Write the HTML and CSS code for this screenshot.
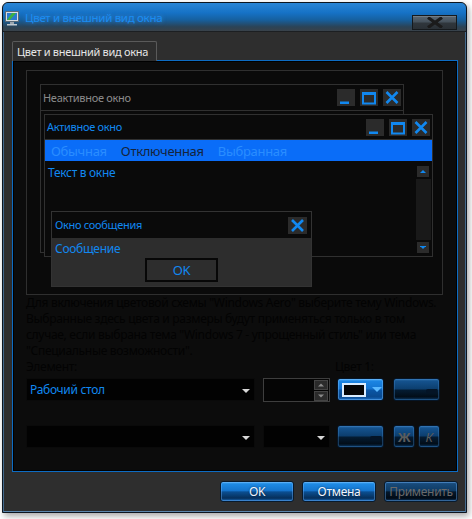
FILE: index.html
```html
<!DOCTYPE html>
<html lang="ru">
<head>
<meta charset="utf-8">
<title>Цвет и внешний вид окна</title>
<link rel="stylesheet" href="styles.css">
</head>
<body>
<div class="window">
  <div class="titlebar">
    <svg class="appicon" width="14" height="16" viewBox="0 0 14 16">
      <rect x="0.5" y="1.5" width="13" height="10" fill="#d8dde2" stroke="#5a6a78"/>
      <rect x="2" y="3" width="10" height="7" fill="#2a7ad0"/>
      <path d="M2 10 L7 3 L11 3 L5 10Z" fill="#3cb043"/>
      <rect x="5" y="12" width="4" height="2" fill="#9aa6b0"/>
      <rect x="2" y="14" width="10" height="1.5" fill="#c0c8d0"/>
    </svg>
    <span class="title">Цвет и внешний вид окна</span>
    <div class="closebtn">
      <svg width="20" height="11" viewBox="0 0 20 11"><path d="M3 0.5 L17 10.5 M17 0.5 L3 10.5" stroke="#1b1b1b" stroke-width="3.2"/></svg>
    </div>
  </div>
  <div class="frame">
    <div class="tab">Цвет и внешний вид окна</div>
    <div class="panel">
      <div class="preview">
        <div class="win inactive">
          <div class="wtitle">
            <span class="wname dim">Неактивное окно</span>
            <div class="wbtns">
              <span class="wbtn"><svg width="18" height="17" viewBox="0 0 18 17"><rect x="3" y="12.5" width="9" height="2.5" fill="#1188f0"/></svg></span>
              <span class="wbtn"><svg width="18" height="17" viewBox="0 0 18 17"><rect x="3" y="4" width="12" height="10.5" fill="none" stroke="#1188f0" stroke-width="2"/><rect x="2" y="3" width="14" height="3" fill="#1188f0"/></svg></span>
              <span class="wbtn"><svg width="18" height="17" viewBox="0 0 18 17"><path d="M3.5 3 L14.5 14 M14.5 3 L3.5 14" stroke="#1188f0" stroke-width="2.6"/></svg></span>
            </div>
          </div>
        </div>
        <div class="win active">
          <div class="wtitle">
            <span class="wname">Активное окно</span>
            <div class="wbtns">
              <span class="wbtn"><svg width="18" height="17" viewBox="0 0 18 17"><rect x="3" y="12.5" width="9" height="2.5" fill="#1188f0"/></svg></span>
              <span class="wbtn"><svg width="18" height="17" viewBox="0 0 18 17"><rect x="3" y="4" width="12" height="10.5" fill="none" stroke="#1188f0" stroke-width="2"/><rect x="2" y="3" width="14" height="3" fill="#1188f0"/></svg></span>
              <span class="wbtn"><svg width="18" height="17" viewBox="0 0 18 17"><path d="M3.5 3 L14.5 14 M14.5 3 L3.5 14" stroke="#1188f0" stroke-width="2.6"/></svg></span>
            </div>
          </div>
          <div class="menubar">
            <span class="mi normal">Обычная</span>
            <span class="mi disabled">Отключенная</span>
            <span class="mi selected">Выбранная</span>
          </div>
          <div class="wtext">Текст в окне</div>
          <div class="scroll">
            <span class="sbtn"><svg width="12" height="11" viewBox="0 0 12 11"><path d="M3 7 L9 7 L6 4Z" fill="#1188f0"/></svg></span>
            <span class="strack"></span>
            <span class="sbtn"><svg width="12" height="11" viewBox="0 0 12 11"><path d="M3 4 L9 4 L6 7Z" fill="#1188f0"/><rect x="3" y="4" width="6" height="1" fill="#1188f0"/></svg></span>
          </div>
        </div>
        <div class="msgbox">
          <div class="mtitle">
            <span class="wname">Окно сообщения</span>
            <span class="wbtn"><svg width="19" height="17" viewBox="0 0 19 17"><path d="M4 3 L15 14 M15 3 L4 14" stroke="#1188f0" stroke-width="2.6"/></svg></span>
          </div>
          <div class="mbody">
            <div class="mtext">Сообщение</div>
            <div class="okbtn">OK</div>
          </div>
        </div>
      </div>
      <p class="info">Для включения цветовой схемы "Windows Aero" выберите тему Windows.<br>Выбранные здесь цвета и размеры будут применяться только в том<br>случае, если выбрана тема "Windows 7 - упрощенный стиль" или тема<br>"Специальные возможности".</p>
      <div class="labels">
        <span class="lbl-el">Элемент:</span>
        <span class="lbl-c1">Цвет 1:</span>
      </div>
      <div class="row">
        <div class="combo wide"><span class="ctext">Рабочий стол</span><span class="carrow"></span></div>
        <div class="spin">
          <div class="spinbtns">
            <span class="sp"><svg width="12" height="8" viewBox="0 0 12 8"><path d="M3 5.5 L9 5.5 L6 2.5Z" fill="#8a8a8a"/></svg></span>
            <span class="sp"><svg width="12" height="8" viewBox="0 0 12 8"><path d="M3 2.5 L9 2.5 L6 5.5Z" fill="#8a8a8a"/></svg></span>
          </div>
        </div>
        <div class="gbtn bright colorbtn"><span class="swatch"></span><span class="garrow"></span></div>
        <div class="gbtn dark wbtn47"><span class="shade"></span></div>
      </div>
      <div class="row row2">
        <div class="combo wide"><span class="carrow"></span></div>
        <div class="combo small"><span class="carrow"></span></div>
        <div class="gbtn dark colorbtn2"><span class="shade"></span></div>
        <div class="gbtn dark sq bold">Ж</div>
        <div class="gbtn dark sq ital">К</div>
      </div>
    </div>
    <div class="footer">
      <div class="fbtn">OK</div>
      <div class="fbtn">Отмена</div>
      <div class="fbtn off">Применить</div>
    </div>
  </div>
</div>
</body>
</html>
```
FILE: styles.css
```css
* { box-sizing: border-box; }
html, body { margin: 0; padding: 0; }
body {
  background: #ffffff;
  font-family: "Noto Sans", "Open Sans", sans-serif;
  font-size: 12px;
  letter-spacing: -0.3px;
  width: 472px;
  height: 519px;
  overflow: hidden;
}
.window {
  margin: 2px 0 0 2px;
  width: 465px;
  height: 511px;
  border: 1px solid #0d1620;
  border-radius: 6px 6px 0 0;
  background: #2e2e2e;
  box-shadow: 2px 3px 6px rgba(0,0,0,0.35);
  display: flex;
  flex-direction: column;
  overflow: hidden;
}
.titlebar {
  height: 29px;
  flex: none;
  display: flex;
  align-items: flex-start;
  background: linear-gradient(to bottom, #2a86d6 0%, #1672c6 35%, #16609f 60%, #2b4356 85%, #39424a 100%);
  border-bottom: 1px solid #1c1f22;
}
.appicon { margin: 7px 0 0 2px; flex: none; }
.title {
  margin: 7px 0 0 6px;
  color: #1a8cf2;
  font-size: 11.5px;
  line-height: 16px;
  white-space: nowrap;
  text-shadow: 0 0 4px rgba(90,170,255,0.5);
}
.closebtn {
  margin: 12px 9px 0 auto;
  width: 45px;
  height: 15px;
  border: 1px solid #15191c;
  background: linear-gradient(to bottom, #5b6772 0%, #46525c 45%, #2f363c 55%, #2a3035 100%);
  box-shadow: inset 0 1px 0 rgba(255,255,255,0.15);
  display: flex;
  align-items: center;
  justify-content: center;
}
.frame {
  flex: 1;
  display: flex;
  flex-direction: column;
  padding: 9px 7px 0 8px;
  border-left: 1px solid #43698c;
  border-right: 1px solid #43698c;
  border-bottom: 1px solid #5a86ad;
}
.tab {
  position: relative;
  z-index: 2;
  width: 145px;
  height: 20px;
  margin-bottom: -1px;
  padding: 1px 0 0 4px;
  background: #2e2e2e;
  border: 1px solid #5a5a5a;
  border-bottom: none;
  border-radius: 2px 2px 0 0;
  color: #e6e6e6;
  font-size: 11px;
  line-height: 17px;
  white-space: nowrap;
}
.panel {
  width: 446px;
  height: 412px;
  flex: none;
  border: 1px solid #0d6cc4;
  box-shadow: inset 0 0 0 1px #000;
  background: #0c0c0c;
  padding: 9px 0 0 13px;
}
.preview {
  position: relative;
  width: 417px;
  height: 225px;
  border: 1px solid #2f2f2f;
  background: #0a0a0a;
}
.win {
  position: absolute;
  border: 1px solid #303030;
  background: #0a0a0a;
}
.inactive { left: 13px; top: 13px; width: 364px; height: 169px; }
.active { left: 17px; top: 43px; width: 389px; height: 143px; }
.wtitle {
  height: 26px;
  border-bottom: 1px solid #303030;
  display: flex;
  align-items: center;
  padding: 0 2px 0 2px;
}
.active .wtitle { height: 25px; }
.wname { color: #1188f0; font-size: 11px; line-height: 16px; white-space: nowrap; }
.wname.dim { color: #8a8a8a; }
.wbtns { margin-left: auto; display: flex; gap: 5px; }
.wbtn {
  width: 18px;
  height: 17px;
  background: #2b2b2b;
  display: block;
}
.wbtn svg { display: block; }
.menubar {
  height: 21px;
  background: #0a6df8;
  display: flex;
  align-items: center;
  gap: 14px;
  padding-left: 6px;
  font-size: 13px;
  white-space: nowrap;
}
.mi.normal, .mi.selected { color: #2a8dff; }
.mi.disabled { color: #15243c; }
.wtext { color: #1188f0; padding: 4px 0 0 3px; font-size: 12px; line-height: 16px; }
.scroll {
  position: absolute;
  right: 1px;
  top: 51px;
  width: 16px;
  bottom: 3px;
  display: flex;
  flex-direction: column;
  align-items: center;
}
.sbtn { width: 12px; height: 11px; background: #2b2b2b; display: block; flex: none; }
.sbtn svg { display: block; }
.strack { flex: 1; width: 15px; background: #191919; margin: 2px 0; }
.msgbox {
  position: absolute;
  left: 24px;
  top: 140px;
  width: 261px;
  height: 76px;
  border: 1px solid #333;
  background: #2d2d2d;
  display: flex;
  flex-direction: column;
}
.mtitle {
  height: 26px;
  background: #0a0a0a;
  display: flex;
  align-items: center;
  padding: 0 4px 0 3px;
  justify-content: space-between;
}
.mtitle .wbtn { width: 19px; }
.mbody { flex: 1; padding: 3px 0 0 3px; position: relative; }
.mtext { color: #1188f0; font-size: 12px; line-height: 16px; }
.okbtn {
  position: absolute;
  left: 93px;
  top: 20px;
  width: 73px;
  height: 24px;
  border: 2px solid #070707;
  background: #2d2d2d;
  color: #1188f0;
  font-size: 13px;
  line-height: 20px;
  text-align: center;
}
.info {
  margin: 0;
  color: #030303;
  font-size: 12px;
  line-height: 16px;
  white-space: nowrap;
}
.labels {
  height: 16px;
  display: flex;
  color: #030303;
  font-size: 12px;
  line-height: 16px;
}
.lbl-c1 { margin-left: 258px; }
.row {
  margin-top: 3px;
  height: 23px;
  display: flex;
  align-items: stretch;
}
.row2 { margin-top: 24px; }
.combo {
  position: relative;
  background: #020202;
  border: 1px solid #0a0a0a;
  display: flex;
  align-items: center;
}
.combo.wide { width: 229px; margin-right: 8px; }
.combo.small { width: 67px; margin-right: 7px; }
.ctext { color: #1188f0; font-size: 12px; padding-left: 3px; line-height: 16px; }
.carrow {
  position: absolute;
  right: 4px;
  top: 10px;
  width: 0;
  height: 0;
  border-left: 4px solid transparent;
  border-right: 4px solid transparent;
  border-top: 4px solid #d8d8d8;
}
.spin {
  width: 67px;
  margin-right: 7px;
  border: 1px solid #3e3e3e;
  background: #050505;
  display: flex;
  justify-content: flex-end;
  height: 24px;
}
.spinbtns { display: flex; flex-direction: column; gap: 1px; padding: 1px 1px 0 0; }
.sp { width: 14px; height: 10px; background: #2b2b2b; border: 1px solid #444; display: flex; align-items: center; justify-content: center; }
.sp svg { display: block; }
.gbtn {
  position: relative;
  width: 47px;
  border-radius: 3px;
  border: 1px solid #061526;
  display: flex;
  align-items: center;
  justify-content: center;
}
.gbtn.bright {
  background: linear-gradient(to bottom, #4aa8f2 0%, #1b84e2 12%, #1373d0 48%, #0a56a6 52%, #0a4a90 85%, #1a6ec4 100%);
  box-shadow: inset 0 0 0 1px rgba(120,190,255,0.45);
}
.gbtn.dark {
  background: linear-gradient(to bottom, #2a6aa6 0%, #14518c 12%, #0c3e6e 48%, #041c33 52%, #020d18 85%, #0c3a66 100%);
  box-shadow: inset 0 0 0 1px rgba(70,140,210,0.35);
}
.colorbtn { margin-right: 9px; justify-content: flex-start; padding-left: 4px; }
.colorbtn2 { margin-right: 9px; }
.swatch {
  width: 24px;
  height: 14px;
  background: #050505;
  border: 2px solid #d8ecff;
}
.garrow {
  margin-left: 6px;
  width: 0;
  height: 0;
  border-left: 5px solid transparent;
  border-right: 5px solid transparent;
  border-top: 5px solid #5ab8ff;
}
.shade {
  position: absolute;
  right: 2px;
  top: 10px;
  width: 11px;
  height: 4px;
  background: #041426;
  border-radius: 2px 0 0 2px;
}
.gbtn.sq { width: 22px; color: #5c5c5c; font-size: 13px; }
.gbtn.sq + .gbtn.sq { margin-left: 3px; }
.bold { font-weight: bold; }
.ital { font-style: italic; }
.footer {
  margin-top: 9px;
  display: flex;
  justify-content: flex-end;
  gap: 8px;
}
.fbtn {
  width: 74px;
  height: 21px;
  border-radius: 3px;
  border: 1px solid #081a2c;
  background: linear-gradient(to bottom, #5ab4f4 0%, #1e8ae4 10%, #1574cc 46%, #0b4f92 52%, #062f5a 85%, #1c6cbc 100%);
  box-shadow: inset 0 0 0 1px rgba(110,180,255,0.4);
  color: #f2f6ff;
  text-align: center;
  font-size: 12px;
  line-height: 19px;
  text-shadow: 0 0 2px rgba(0,0,0,0.6);
}
.fbtn.off {
  background: linear-gradient(to bottom, #2a5f92 0%, #174a7a 10%, #0f3b64 46%, #04182c 52%, #020b15 85%, #0e3a66 100%);
  color: #6a6a6a;
  text-shadow: none;
}
```
